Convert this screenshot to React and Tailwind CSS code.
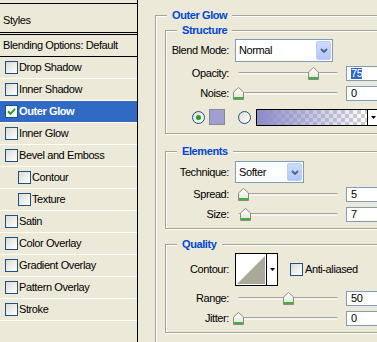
import React from 'react';

const FONT = "[font-family:'Liberation_Sans',Arial,sans-serif]";

const styleRows = [
  { label: 'Drop Shadow' },
  { label: 'Inner Shadow' },
  { label: 'Outer Glow', checked: true, selected: true },
  { label: 'Inner Glow' },
  { label: 'Bevel and Emboss' },
  { label: 'Contour', indent: true },
  { label: 'Texture', indent: true },
  { label: 'Satin' },
  { label: 'Color Overlay' },
  { label: 'Gradient Overlay' },
  { label: 'Pattern Overlay' },
  { label: 'Stroke' },
];

function Checkbox({ checked }) {
  return (
    <span
      className={
        checked
          ? 'w-[13px] h-[13px] shrink-0 border border-[#1c5180] bg-white flex items-center justify-center'
          : 'w-[13px] h-[13px] shrink-0 border border-[#1c5180] bg-linear-to-br from-[#dcdcd5] to-white flex items-center justify-center'
      }
    >
      {checked && (
        <svg width="9" height="9" viewBox="0 0 9 9">
          <path d="M1 4.2 L3.5 6.8 L8 1.8" stroke="#21a121" strokeWidth="2" fill="none" />
        </svg>
      )}
    </span>
  );
}

function Radio({ checked }) {
  return (
    <span className="w-[13px] h-[13px] shrink-0 rounded-full border border-[#1c5180] bg-linear-to-br from-[#dcdcd5] to-white flex items-center justify-center">
      {checked && <span className="w-[5px] h-[5px] rounded-full bg-[#21a121]" />}
    </span>
  );
}

function Group({ title, className, children }) {
  return (
    <fieldset className={'border border-[#a5a398] shadow-[inset_1px_1px_0_#fff,1px_1px_0_#fff] ' + className}>
      <legend className="ml-[11px] px-[5px] bg-[#ece9d8] text-[#0046d5] font-bold text-[11px] leading-[13px]">
        {title}
      </legend>
      {children}
    </fieldset>
  );
}

function Label({ children }) {
  return <span className="w-[63px] shrink-0 text-right">{children}</span>;
}

function DownArrow() {
  return (
    <svg width="5" height="3" viewBox="0 0 5 3">
      <polygon points="0,0 5,0 2.5,3" fill="#000" />
    </svg>
  );
}

function Select({ value, width }) {
  return (
    <div className={'ml-[6px] h-full border border-[#7f9db9] bg-white flex items-center pl-[3px] pr-[1px] py-[1px] ' + width}>
      <span className="flex-1">{value}</span>
      <span className="w-[15px] h-full rounded-[2px] bg-linear-to-b from-[#cddcfc] to-[#b2c7f6] border border-[#bccdf4] flex items-center justify-center">
        <svg width="8" height="5" viewBox="0 0 8 5">
          <path d="M1 1 L4 4 L7 1" stroke="#4d6185" strokeWidth="1.8" fill="none" />
        </svg>
      </span>
    </div>
  );
}

function Thumb() {
  return (
    <svg width="11" height="13" viewBox="0 0 11 13">
      <defs>
        <linearGradient id="thumbFill" x1="0" y1="0" x2="0" y2="1">
          <stop offset="0" stopColor="#ffffff" />
          <stop offset="1" stopColor="#e3e3da" />
        </linearGradient>
      </defs>
      <path d="M5.5 0.5 L10.5 5 L10.5 12.5 L0.5 12.5 L0.5 5 Z" fill="url(#thumbFill)" stroke="#8c8b82" />
      <rect x="1" y="10" width="9" height="2" fill="#3cb43c" />
    </svg>
  );
}

function SliderRow({ label, value, highlight, className }) {
  return (
    <div className={'flex items-center h-[20px] ' + (className || '')}>
      <Label>{label}</Label>
      <div className="relative ml-[9px] w-[100px] h-[13px] flex items-center shrink-0">
        <div className="w-full h-[3px] rounded-full bg-[#f5f4ee] border-t border-[#a3a296]" />
        <div className="absolute top-0" style={{ left: value - 5 }}>
          <Thumb />
        </div>
      </div>
      <div className="ml-[8px] w-[40px] h-[15px] shrink-0 border border-[#7f9db9] bg-white flex items-center pl-[4px]">
        {highlight ? <span className="bg-[#316ac5] text-white leading-[11px]">{value}</span> : <span>{value}</span>}
      </div>
    </div>
  );
}

export default function App() {
  return (
    <div className={'w-[377px] h-[342px] bg-[#ece9d8] flex overflow-hidden text-black text-[11px] leading-[13px] tracking-[-0.4px] ' + FONT}>
      {/* styles list */}
      <div className="w-[138px] shrink-0 border-r border-black pt-[3px]">
        <div className="h-[30px] border-y border-black pl-[3px] pt-[10px]">Styles</div>
        <div className="mt-[1px] h-[23px] border-y border-black pl-[3px] flex items-center">Blending Options: Default</div>
        {styleRows.map((r) => (
          <div
            key={r.label}
            className={
              'h-[22px] border-b border-white flex items-center gap-[1px] ' +
              (r.indent ? 'pl-[18px] ' : 'pl-[5px] ') +
              (r.selected ? 'bg-[#316ac5] text-white font-bold' : '')
            }
          >
            <Checkbox checked={r.checked} />
            <span>{r.label}</span>
          </div>
        ))}
      </div>

      {/* options */}
      <div className="flex-1 min-w-0 overflow-hidden">
        <Group title="Outer Glow" className="ml-[17px] mt-[9px] w-[240px] pb-[20px]">
          <Group title="Structure" className="ml-[9px] mt-[2px] pb-[7px]">
            <div className="flex items-center h-[23px] mt-[2px]">
              <Label>Blend Mode:</Label>
              <Select value="Normal" width="w-[98px]" />
            </div>
            <SliderRow label="Opacity:" value={75} highlight className="mt-[1px]" />
            <SliderRow label="Noise:" value={0} />
            <div className="flex items-center h-[18px] mt-[5px] pl-[26px]">
              <Radio checked />
              <span className="ml-[4px] w-[16px] h-[16px] shrink-0 border border-[#8a8a8a] bg-[#9f9fd1]" />
              <span className="ml-[13px]">
                <Radio />
              </span>
              <div className="ml-[5px] w-[124px] h-[17px] shrink-0 border border-black flex">
                <span className="w-[110px] h-full [background-image:linear-gradient(to_right,#8b8bc9,#8b8bc900),repeating-conic-gradient(#d0d0d0_0_25%,#fff_0_50%)] [background-size:100%_100%,8px_8px]" />
                <span className="flex-1 border-l border-black bg-white flex items-center justify-center">
                  <DownArrow />
                </span>
              </div>
            </div>
          </Group>

          <Group title="Elements" className="ml-[9px] mt-[11px] pb-[4px]">
            <div className="flex items-center h-[22px] mt-[3px]">
              <Label>Technique:</Label>
              <Select value="Softer" width="w-[69px]" />
            </div>
            <SliderRow label="Spread:" value={5} className="mt-[1px]" />
            <SliderRow label="Size:" value={7} />
          </Group>

          <Group title="Quality" className="ml-[9px] mt-[9px] pb-[4px]">
            <div className="flex items-center h-[33px] mt-[2px]">
              <Label>Contour:</Label>
              <div className="ml-[6px] w-[43px] h-full shrink-0 border border-black bg-white flex">
                <span className="w-[30px] h-full p-[1px]">
                  <svg width="28" height="29" viewBox="0 0 28 29" className="block">
                    <polygon points="0,29 28,1 28,29" fill="#aba899" />
                  </svg>
                </span>
                <span className="flex-1 border-l border-black flex items-center justify-center">
                  <DownArrow />
                </span>
              </div>
              <span className="ml-[12px]">
                <Checkbox />
              </span>
              <span className="ml-[2px]">Anti-aliased</span>
            </div>
            <SliderRow label="Range:" value={50} className="mt-[2px]" />
            <SliderRow label="Jitter:" value={0} />
          </Group>
        </Group>
      </div>
    </div>
  );
}
